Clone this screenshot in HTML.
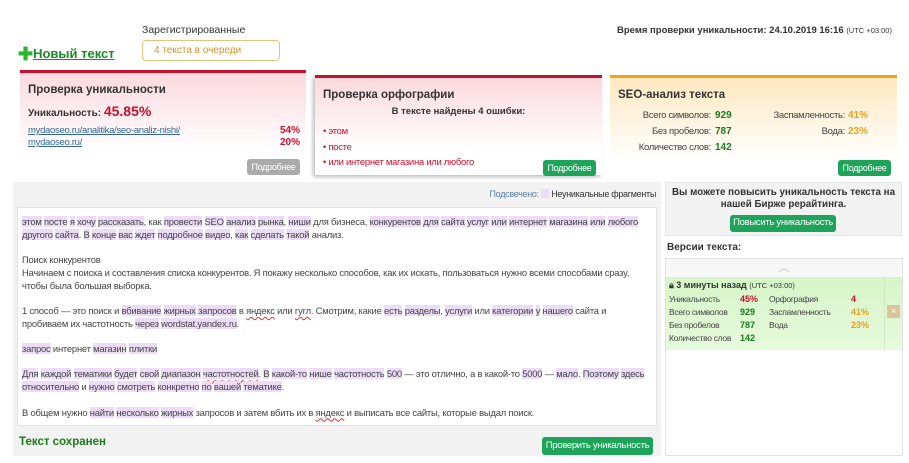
<!DOCTYPE html>
<html><head><meta charset="utf-8"><style>
*{margin:0;padding:0;box-sizing:border-box}
body{width:909px;height:463px;background:#fff;font-family:"Liberation Sans",sans-serif;color:#333;position:relative;overflow:hidden}
.a{position:absolute;white-space:nowrap}
.btn{position:absolute;background:#1ea45a;color:#fff;font-size:9px;letter-spacing:-.3px;border-radius:3px;text-align:center;line-height:16px}
.card{position:absolute;height:100px}
.t{font-weight:bold;font-size:11.5px;color:#333}
.h{background:#ecdcf8}
.txt{font-size:9.4px;letter-spacing:-.2px;color:#444;line-height:12.7px;white-space:nowrap}
.u{text-decoration:underline wavy #d33;text-underline-offset:2px;text-decoration-thickness:1px}
.g{color:#1a7a1a;font-weight:bold}
.o{color:#e8a020;font-weight:bold}
.r{color:#c8102e;font-weight:bold}
.s{font-size:9.5px;letter-spacing:-.3px;color:#444}
</style></head><body>
<div class="a" style="left:142px;top:24px;font-size:10.5px;color:#333">Зарегистрированные</div>
<div class="a" style="left:142px;top:40px;width:138px;height:21px;border:1.5px solid #e8c17a;border-radius:4px;font-size:10px;color:#d8902a;padding:4px 0 0 11px">4 текста в очереди</div>
<div class="a" style="left:18px;top:44px;font-size:13px;font-weight:bold;color:#1a8a2a"><span style="font-size:18px;color:#2cb82c;vertical-align:-2px">✚</span><span style="text-decoration:underline">Новый текст</span></div>
<div class="a" style="left:617px;top:25px;font-size:9.5px;font-weight:bold;color:#333">Время проверки уникальности: 24.10.2019 16:16 <span style="font-size:7.5px;font-weight:normal">(UTC +03:00)</span></div>

<div class="card" style="left:20px;top:70px;width:286px;height:106px;border-top:3px solid #c8102e;background:linear-gradient(#fbd9de,#fff 75%);">
<div class="a t" style="left:8px;top:11px">Проверка уникальности</div>
<div class="a" style="left:8px;top:30px;font-size:10px;font-weight:bold">Уникальность: <span style="color:#c8102e;font-size:14px">45.85%</span></div>
<div class="a s" style="left:8px;top:52px;color:#336699;text-decoration:underline">mydaoseo.ru/analitika/seo-analiz-nishi/</div>
<div class="a s" style="left:8px;top:64px;color:#336699;text-decoration:underline">mydaoseo.ru/</div>
<div class="a r" style="right:6px;top:52px;font-size:10px">54%</div>
<div class="a r" style="right:6px;top:64px;font-size:10px">20%</div>
<div class="btn" style="left:227px;top:86px;width:53px;background:#aaa">Подробнее</div>
</div>

<div class="card" style="left:315px;top:75px;width:287px;border-top:3px solid #c8102e;background:linear-gradient(#fbd9de,#fff 75%);box-shadow:-2px 2px 4px #bbb">
<div class="a t" style="left:8px;top:11px">Проверка орфографии</div>
<div class="a" style="left:0;width:287px;text-align:center;top:28px;font-size:9.5px;font-weight:bold">В тексте найдены 4 ошибки:</div>
<div class="a s" style="left:8px;top:48px;color:#c8102e">• этом</div>
<div class="a s" style="left:8px;top:64px;color:#c8102e">• посте</div>
<div class="a s" style="left:8px;top:79px;color:#c8102e">• или интернет магазина или любого</div>
<div class="btn" style="left:228px;top:82px;width:53px">Подробнее</div>
</div>

<div class="card" style="left:610px;top:75px;width:287px;border-top:3px solid #e8a818;background:linear-gradient(#fde8c0,#fff 85%);">
<div class="a t" style="left:8px;top:11px">SEO-анализ текста</div>
<div class="a s" style="right:186px;top:32px">Всего символов:</div><div class="a g" style="left:105px;top:32px;font-size:10px">929</div>
<div class="a s" style="right:186px;top:48px">Без пробелов:</div><div class="a g" style="left:105px;top:48px;font-size:10px">787</div>
<div class="a s" style="right:186px;top:64px">Количество слов:</div><div class="a g" style="left:105px;top:64px;font-size:10px">142</div>
<div class="a s" style="right:52px;top:32px">Заспамленность:</div><div class="a o" style="left:238px;top:32px;font-size:10px">41%</div>
<div class="a s" style="right:52px;top:48px">Вода:</div><div class="a o" style="left:238px;top:48px;font-size:10px">23%</div>
<div class="btn" style="left:228px;top:82px;width:53px">Подробнее</div>
</div>

<div class="a" style="left:13px;top:182px;width:648px;height:274px;background:#f2f2f2"></div>
<div class="a" style="right:253px;top:189px;font-size:9px;letter-spacing:-.3px"><span style="color:#5a7fa8">Подсвечено:</span> <span style="display:inline-block;width:8px;height:9px;background:#ecdcf8;vertical-align:-1px"></span> Неуникальные фрагменты</div>
<div class="a" style="left:17px;top:207px;width:640px;height:219px;background:#fff;border:1px solid #e2e2e2"></div>
<div class="a txt" style="left:22px;top:216px">
<span class="h">этом</span> <span class="h">посте</span> <span class="h">я</span> <span class="h">хочу</span> <span class="h">рассказать</span>, как <span class="h">провести</span> <span class="h">SEO</span> <span class="h">анализ</span> <span class="h">рынка</span>, <span class="h">ниши</span> для бизнеса, <span class="h">конкурентов</span> <span class="h">для</span> <span class="h">сайта</span> <span class="h">услуг</span> <span class="h">или</span> <span class="h">интернет</span> <span class="h">магазина</span> <span class="h">или</span> <span class="h">любого</span><br>
<span class="h">другого</span> <span class="h">сайта</span>. <span class="h">В</span> <span class="h">конце</span> <span class="h">вас</span> <span class="h">ждет</span> <span class="h">подробное</span> <span class="h">видео</span>, <span class="h">как</span> <span class="h">сделать</span> <span class="h">такой</span> анализ.<br><br>
Поиск конкурентов<br>
Начинаем с поиска и составления списка конкурентов. Я покажу несколько способов, как их искать, пользоваться нужно всеми способами сразу,<br>
чтобы была большая выборка.<br><br>
1 способ — это поиск и <span class="h">вбивание</span> <span class="h">жирных</span> <span class="h">запросов</span> в <span class="u">яндекс</span> или <span class="u">гугл</span>. Смотрим, какие <span class="h">есть</span> <span class="h">разделы</span>, <span class="h">услуги</span> или <span class="h">категории</span> <span class="h">у</span> <span class="h">нашего</span> сайта и<br>
пробиваем их частотность <span class="h">через</span> <span class="h">wordstat.yandex.ru</span>.<br><br>
<span class="h">запрос</span> интернет <span class="h">магазин</span> <span class="h">плитки</span><br><br>
<span class="h">Для</span> <span class="h">каждой</span> <span class="h">тематики</span> <span class="h">будет</span> <span class="h">свой</span> <span class="h">диапазон</span> <span class="h u">частотностей</span>. <span class="h">В</span> <span class="h">какой-то</span> <span class="h">нише</span> <span class="h">частотность</span> <span class="h">500</span> — это отлично, а в какой-то <span class="h">5000</span> — <span class="h">мало</span>. <span class="h">Поэтому</span> <span class="h">здесь</span><br>
<span class="h">относительно</span> и <span class="h">нужно</span> <span class="h">смотреть</span> <span class="h">конкретно</span> <span class="h">по</span> <span class="h">вашей</span> <span class="h">тематике</span>.<br><br>
В общем нужно <span class="h">найти</span> <span class="h">несколько</span> <span class="h">жирных</span> запросов и затем вбить их в <span class="u">яндекс</span> и выписать все сайты, которые выдал поиск.
</div>
<div class="a" style="left:19px;top:436px;font-size:11.5px;font-weight:bold;color:#1a7a1a">Текст сохранен</div>
<div class="btn" style="left:542px;top:437px;width:111px;height:18px;line-height:18px;font-size:9.5px">Проверить уникальность</div>

<div class="a" style="left:665px;top:182px;width:237px;height:54px;background:#f2f2f2;border:1px solid #e6e6e6"></div>
<div class="a" style="left:665px;width:237px;text-align:center;top:187px;font-size:9.8px;font-weight:bold;line-height:12px;white-space:normal">Вы можете повысить уникальность текста на<br>нашей Бирже рерайтинга.</div>
<div class="btn" style="left:730px;top:215px;width:106px;height:17px;font-size:9.5px">Повысить уникальность</div>
<div class="a" style="left:667px;top:242px;font-size:10px;font-weight:bold">Версии текста:</div>
<div class="a" style="left:665px;top:258px;width:238px;height:198px;border:1px solid #e2e2e2;background:#fff"></div>
<div class="a" style="left:666px;top:259px;width:236px;height:18px;background:#f7f7f7;text-align:center;color:#bbb;font-size:11px;line-height:18px">︿</div>
<div class="a" style="left:666px;top:277px;width:236px;height:73px;background:linear-gradient(#d6f5c8,#e6fadc)"></div>
<div class="a" style="left:884px;top:277px;width:1px;height:73px;background:#cfe8c0"></div>
<div class="a" style="left:887px;top:305px;width:13px;height:13px;background:#dcc59a;color:#fff;font-size:10px;text-align:center;line-height:13px">×</div>
<div class="a" style="left:669px;top:280px;font-size:9px;font-weight:bold">🔒︎ 3 минуты назад <span style="font-weight:normal;font-size:7.5px">(UTC +03:00)</span></div>
<div class="a s" style="left:669px;top:294px;font-size:8.5px">Уникальность</div><div class="a r" style="left:740px;top:294px;font-size:9px">45%</div>
<div class="a s" style="left:669px;top:307px;font-size:8.5px">Всего символов</div><div class="a g" style="left:740px;top:307px;font-size:9px">929</div>
<div class="a s" style="left:669px;top:320px;font-size:8.5px">Без пробелов</div><div class="a g" style="left:740px;top:320px;font-size:9px">787</div>
<div class="a s" style="left:669px;top:333px;font-size:8.5px">Количество слов</div><div class="a g" style="left:740px;top:333px;font-size:9px">142</div>
<div class="a s" style="left:769px;top:294px;font-size:8.5px">Орфография</div><div class="a r" style="left:851px;top:294px;font-size:9px">4</div>
<div class="a s" style="left:769px;top:307px;font-size:8.5px">Заспамленность</div><div class="a o" style="left:851px;top:307px;font-size:9px">41%</div>
<div class="a s" style="left:769px;top:320px;font-size:8.5px">Вода</div><div class="a o" style="left:851px;top:320px;font-size:9px">23%</div>
</body></html>
